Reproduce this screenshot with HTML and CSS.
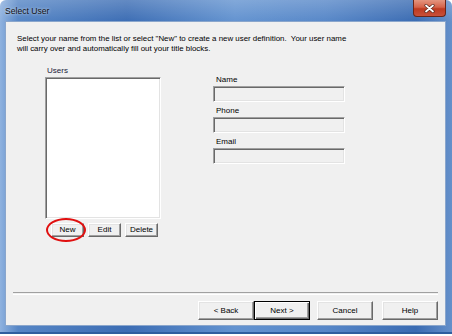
FILE: index.html
```html
<!DOCTYPE html>
<html lang="en">
<head>
  <meta charset="UTF-8">
  <title>Select User</title>
  <link rel="stylesheet" href="styles.css">
</head>
<body>
  <div class="window">
    <div class="titlebar">
      <span class="title">Select User</span>
      <div class="close-btn">
        <svg width="11" height="9" viewBox="0 0 11 9">
          <path d="M2 1.5 L9 7.5 M9 1.5 L2 7.5" stroke="#5a2a20" stroke-width="3.2" stroke-linecap="round"/>
          <path d="M2 1.5 L9 7.5 M9 1.5 L2 7.5" stroke="#ffffff" stroke-width="1.7" stroke-linecap="round"/>
        </svg>
      </div>
    </div>
    <div class="client">
      <p class="intro">Select your name from the list or select "New" to create a new user definition.&nbsp; Your user name<br>will carry over and automatically fill out your title blocks.</p>

      <div class="main">
        <div class="users">
          <div class="label users-label">Users</div>
          <div class="listbox"></div>
          <div class="list-buttons">
            <button class="btn small new-btn">New</button>
            <button class="btn small">Edit</button>
            <button class="btn small">Delete</button>
            <div class="highlight-ring"></div>
          </div>
        </div>

        <div class="details">
          <div class="field-group">
            <div class="label">Name</div>
            <div class="field"></div>
          </div>
          <div class="field-group">
            <div class="label">Phone</div>
            <div class="field"></div>
          </div>
          <div class="field-group">
            <div class="label">Email</div>
            <div class="field"></div>
          </div>
        </div>
      </div>

      <div class="footer">
        <div class="separator"></div>
        <div class="wizard-buttons">
          <button class="btn wide">&lt; Back</button>
          <button class="btn wide default">Next &gt;</button>
          <button class="btn wide cancel">Cancel</button>
          <button class="btn wide help">Help</button>
        </div>
      </div>
    </div>
  </div>
</body>
</html>
```

FILE: styles.css
```css
body {
  margin: 0;
  background: #ffffff;
  font-family: "Liberation Sans", Arial, sans-serif;
}

.window {
  width: 452px;
  height: 334px;
  box-sizing: border-box;
  padding: 0 6px 6px 5px;
  display: flex;
  flex-direction: column;
  border-radius: 6px 6px 0 0;
  border-bottom: 2px solid #2f5e9f;
  background:
    linear-gradient(180deg, rgba(255, 255, 255, 0.2), rgba(255, 255, 255, 0) 22px),
    linear-gradient(90deg, #8fb2df 0%, #5585c5 4%, #3c6db4 28%, #6393d0 52%, #5787c8 72%, #3a6bb2 92%, #6590ca 100%);
}

.titlebar {
  height: 21px;
  display: flex;
  justify-content: space-between;
  align-items: flex-start;
}

.title {
  margin-top: 6px;
  font-size: 8.6px;
  color: #111111;
  text-shadow: 0 0 3px rgba(255, 255, 255, 0.8);
}

.close-btn {
  width: 31px;
  height: 16px;
  border: 1px solid #6b2518;
  border-top: none;
  border-radius: 0 0 4px 4px;
  background: linear-gradient(180deg, #e4957f 0%, #d5634a 45%, #be3a20 55%, #c8503a 100%);
  display: flex;
  align-items: center;
  justify-content: center;
}

.client {
  flex: 1;
  background: #f0f0f0;
  border: 1px solid #8aa6cc;
  display: flex;
  flex-direction: column;
  font-size: 8px;
  color: #000000;
}

.intro {
  margin: 0;
  padding: 12px 12px 0 11px;
  line-height: 10px;
  font-size: 7.9px;
}

.main {
  display: flex;
  margin-top: 11px;
  padding-left: 39px;
}

.label {
  line-height: 11px;
  font-size: 8px;
}

.users {
  width: 116px;
}

.users-label {
  padding-left: 2px;
  color: #1a1a3a;
}

.listbox {
  margin-top: 1px;
  height: 142px;
  box-sizing: border-box;
  background: #ffffff;
  border: 1px solid;
  border-color: #a0a0a0 #ffffff #ffffff #a0a0a0;
  box-shadow: inset 1px 1px #696969, inset -1px -1px #e3e3e3;
}

.list-buttons {
  position: relative;
  display: flex;
  gap: 4px;
  margin-top: 4px;
  padding-left: 6px;
}

.btn {
  font-family: "Liberation Sans", Arial, sans-serif;
  font-size: 8px;
  color: #000000;
  background: #f0f0f0;
  border: 1px solid;
  border-color: #ffffff #696969 #696969 #ffffff;
  box-shadow: inset -1px -1px #a0a0a0, inset 1px 1px #e3e3e3;
  padding: 0;
  margin: 0;
}

.btn.small {
  width: 33px;
  height: 14px;
  line-height: 10px;
}

.highlight-ring {
  position: absolute;
  left: 1px;
  top: -5px;
  width: 36px;
  height: 20px;
  border: 2px solid #e01010;
  border-radius: 50%;
}

.details {
  margin-left: 52px;
  margin-top: 9px;
  display: flex;
  flex-direction: column;
  gap: 3px;
}

.field-group .label {
  padding-left: 3px;
  margin-bottom: 1px;
}

.field {
  width: 132px;
  height: 16px;
  box-sizing: border-box;
  background: #f0f0f0;
  border: 1px solid;
  border-color: #a0a0a0 #ffffff #ffffff #a0a0a0;
  box-shadow: inset 1px 1px #696969, inset -1px -1px #e3e3e3;
}

.footer {
  margin-top: auto;
  padding-bottom: 5px;
}

.separator {
  margin: 0 7px 0 7px;
  height: 1px;
  border-top: 1px solid #a0a0a0;
  border-bottom: 1px solid #ffffff;
}

.wizard-buttons {
  display: flex;
  justify-content: flex-end;
  margin-top: 6px;
  padding-right: 7px;
}

.btn.wide {
  width: 56px;
  height: 19px;
}

.btn.default {
  border-color: #000000;
  box-shadow: inset 1px 1px #ffffff, inset -1px -1px #696969, inset -2px -2px #a0a0a0;
}

.btn.cancel {
  margin-left: 7px;
}

.btn.help {
  margin-left: 9px;
}
```
